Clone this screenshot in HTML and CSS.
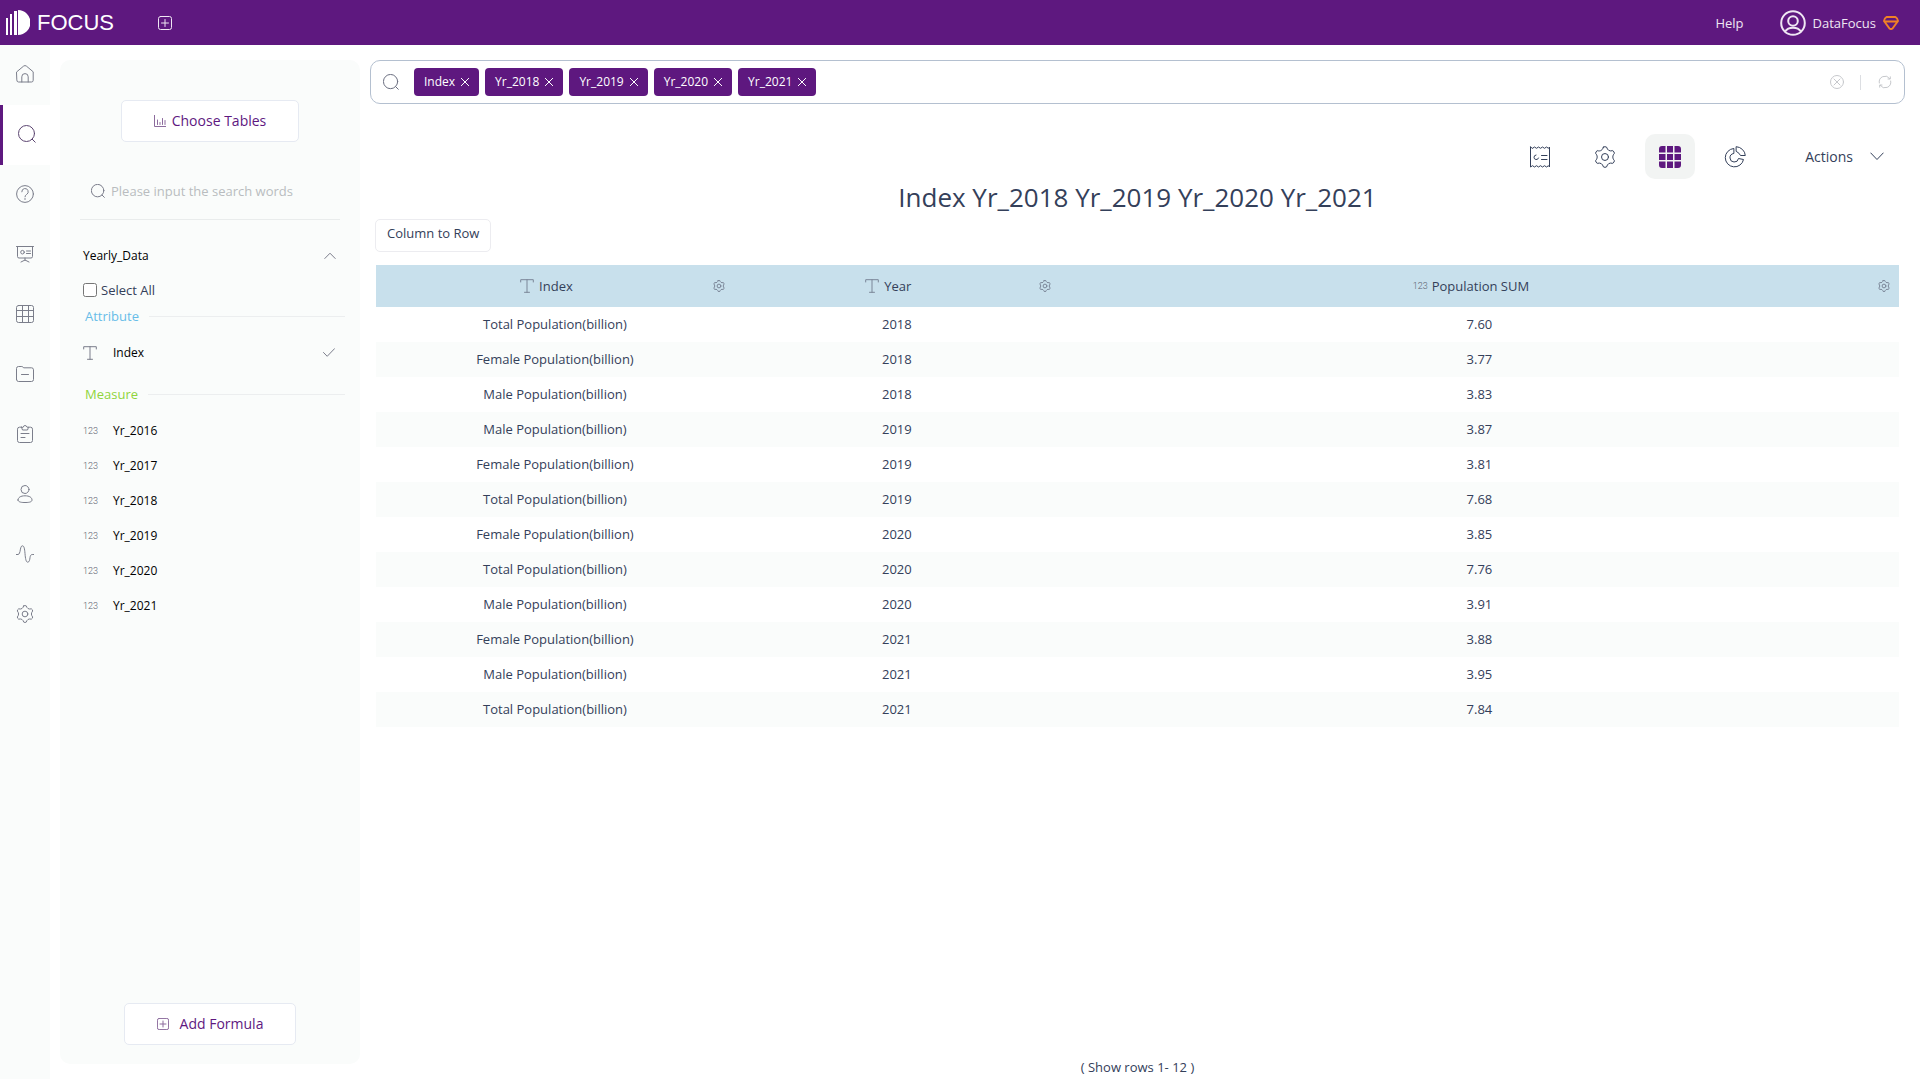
FILE: index.html
```html
<!DOCTYPE html>
<html lang="en">
<head>
<meta charset="utf-8">
<meta name="viewport" content="width=device-width, initial-scale=1">
<title>DataFocus - Search</title>
<link rel="stylesheet" href="styles.css">
</head>
<body>
<svg class="sprite" aria-hidden="true">
  <symbol id="i-plus" viewBox="0 0 14 14"><rect x=".5" y=".5" width="13" height="13" rx="2"/><path d="M7 3.500v7M3.500 7h7"/></symbol>
  <symbol id="i-home" viewBox="0 0 18 18"><path d="M.8 6.800 7.600 1.100Q9 0 10.400 1.100L17.200 6.800V15.300q0 1.700-1.700 1.700h-13Q.8 17 .8 15.300ZM5.800 17v-5.200a3.200 3.200 0 0 1 6.400 0V17"/></symbol>
  <symbol id="i-search" viewBox="0 0 18 18"><circle cx="8.500" cy="8.500" r="8"/><path d="m14.200 14.200 3 3"/></symbol>
  <symbol id="i-help" viewBox="0 0 18 18"><circle cx="9" cy="9" r="8.400"/><path d="M5.800 6.800a3.200 3.200 0 1 1 4.800 2.700Q9 10.300 9 11.800M9 13.500v1"/></symbol>
  <symbol id="i-board" viewBox="0 0 18 18"><path d="M.5 1.500h17M1.500 1.500v10q0 1.500 1.500 1.500h12q1.500 0 1.500-1.500v-10M9 13v2.500M5 17l4-2 4 2M10.500 6h4M10.500 8.500h4"/><circle cx="6.500" cy="7.200" r="1.800"/></symbol>
  <symbol id="i-table" viewBox="0 0 18 18"><rect x=".5" y=".5" width="17" height="17" rx="2"/><path d="M.5 5.500h17M.5 11.500h17M6.500.5v17M12.500.5v17"/></symbol>
  <symbol id="i-folder" viewBox="0 0 18 18"><path d="M.5 14.500v-11Q.5 1.500 2.500 1.500h3.300q1 0 1.800 1.300h7.900q2 0 2 2v9.700q0 2-2 2H2.500q-2 0-2-2ZM5.500 9.500h7"/></symbol>
  <symbol id="i-clip" viewBox="0 0 18 18"><path d="M5.500 2.200H3.500Q1.500 2.200 1.500 4.200V15.500q0 2 2 2h11q2 0 2-2V4.200q0-2-2-2h-2M5.500 2.200 6.500 5h5l1-2.800h-1.500Q10.500.5 9 .5T7 2.200ZM5 8.500h8M5 12.500h4"/></symbol>
  <symbol id="i-person" viewBox="0 0 18 18"><circle cx="9" cy="4.500" r="4"/><path d="M2 15c0-2.500 2.500-4.200 7-4.200s7 1.700 7 4.200-4.500 2.500-7 2.500-7 0-7-2.500Z"/></symbol>
  <symbol id="i-pulse" viewBox="0 0 18 18"><path d="M.3 9.500H2Q3.500 9.500 4 6.500C4.600 3 5 .8 6.500.8S8.600 3.500 9 8.500s1 8.700 2.700 8.700 2-2.500 2.300-4.500.8-3.200 2.200-3.200h1.500"/></symbol>
  <symbol id="i-gear" viewBox="0 0 24 24"><path d="M10.300 1.200Q12 .2 13.700 1.200C14.800 4.500 16.500 6 20.500 5.130Q22.300 6.200 22.200 8.070C20 10.500 20 13.500 22.200 15.930Q22.300 17.800 20.500 18.870C16.500 18 14.800 19.500 13.700 22.800Q12 23.800 10.300 22.800C9.200 19.500 7.500 18 3.500 18.870Q1.700 17.800 1.800 15.930C4 13.500 4 10.500 1.800 8.070Q1.700 6.200 3.500 5.130C7.500 6 9.200 4.500 10.300 1.200Z"/><circle cx="12" cy="12" r="3.800"/></symbol>
  <symbol id="i-bars" viewBox="0 0 12 12"><path d="M.5 0v11.500H12M3.500 5v4.500M6 7.500v2M8.500 3.500v6M11 5.500v4"/></symbol>
  <symbol id="i-up" viewBox="0 0 12 8"><path d="M.8 6.500 6 1.200l5.200 5.300"/></symbol>
  <symbol id="i-down" viewBox="0 0 14 9"><path d="m.8 1 6.200 6.500L13.200 1"/></symbol>
  <symbol id="i-check" viewBox="0 0 12 9"><path d="m.5 4.500 3.700 3.800L11.500.7"/></symbol>
  <symbol id="i-text" viewBox="0 0 14 14"><path d="M.7 3V.7h12.600V3M7 .7v12.600M4.500 13.300h5"/></symbol>
  <symbol id="i-x" viewBox="0 0 8 8"><path d="m.3.3 7.400 7.400M7.700.3.300 7.700"/></symbol>
  <symbol id="i-clear" viewBox="0 0 14 14"><circle cx="7" cy="7" r="6.500"/><path d="m4 4 6 6M10 4l-6 6"/></symbol>
  <symbol id="i-refresh" viewBox="0 0 14 14"><path d="M1.300 8A5.800 5.800 0 0 1 11.800 3.700M12.700 6A5.800 5.800 0 0 1 2.200 10.300M12.300 1.800v2.200h-2.300M1.700 12.200V10h2.300"/></symbol>
  <symbol id="i-receipt" viewBox="0 0 20 22"><path d="M.5 1V21L2.500 19.700l2 1.300 2-1.300 2 1.300 2-1.300 2 1.300 2-1.300 2 1.300 2-1.300 1 1.300V1L18.500 2.300l-2-1.300-2 1.300-2-1.300-2 1.300-2-1.300-2 1.300-2-1.300-2 1.300ZM11.500 9.500H17M11.500 13.500H17M6 9A2.300 2.300 0 1 0 8.500 12"/></symbol>
  <symbol id="i-pie" viewBox="0 0 22 22"><path d="M9.500 2.500A9.200 9.200 0 1 0 19.500 13.500L14.500 12.500A4.300 4.300 0 1 1 9.500 7.500ZM12.500.7A9.500 9.500 0 0 1 21.300 9.500H16.500Q15.500 7 12.500 5.500Z"/></symbol>
  <symbol id="i-user" viewBox="0 0 26 26"><circle cx="13" cy="13" r="11.800"/><circle cx="13" cy="11" r="4.800"/><path d="M5 21.500q2.500-3.800 8-3.800t8 3.800"/></symbol>
  <symbol id="i-gem" viewBox="0 0 16 14"><path d="M3.500 1h9q2.500 1.500 2.500 4L9.500 12.500q-1.500 1-3 0L1 5q0-2.500 2.500-4ZM1.500 5.500h13"/></symbol>
</svg>

<header class="topbar">
  <a class="logo" href="#">
    <svg width="24" height="25" viewBox="0 0 24 25" aria-hidden="true"><path d="M0 8h2v17H0ZM4 4h2v21H4ZM8 1h3v24H8ZM12 0a12.500 12.500 0 0 1 0 25Z"/></svg>
    <span>FOCUS</span>
  </a>
  <button class="bare add-tab" aria-label="New tab"><svg class="icon s14"><use href="#i-plus"/></svg></button>
  <a class="help" href="#">Help</a>
  <button class="bare account">
    <svg class="icon s26"><use href="#i-user"/></svg>
    <span>DataFocus</span>
    <svg class="icon gem"><use href="#i-gem"/></svg>
  </button>
</header>

<div class="shell">
  <nav class="rail">
    <a href="#" aria-label="Home"><svg class="icon s18"><use href="#i-home"/></svg></a>
    <a href="#" aria-label="Search" class="active"><svg class="icon s18"><use href="#i-search"/></svg></a>
    <a href="#" aria-label="Questions"><svg class="icon s18"><use href="#i-help"/></svg></a>
    <a href="#" aria-label="Boards"><svg class="icon s18"><use href="#i-board"/></svg></a>
    <a href="#" aria-label="Tables"><svg class="icon s18"><use href="#i-table"/></svg></a>
    <a href="#" aria-label="Resources"><svg class="icon s18"><use href="#i-folder"/></svg></a>
    <a href="#" aria-label="Tasks"><svg class="icon s18"><use href="#i-clip"/></svg></a>
    <a href="#" aria-label="Users"><svg class="icon s18"><use href="#i-person"/></svg></a>
    <a href="#" aria-label="Monitoring"><svg class="icon s18"><use href="#i-pulse"/></svg></a>
    <a href="#" aria-label="Settings"><svg class="icon s18"><use href="#i-gear"/></svg></a>
  </nav>

  <aside class="panel">
    <button class="boxed choose"><svg class="icon s12"><use href="#i-bars"/></svg>Choose Tables</button>
    <div class="find">
      <svg class="icon s14"><use href="#i-search"/></svg>
      <input type="text" aria-label="Search columns" placeholder="Please input the search words">
    </div>
    <button class="bare source"><span>Yearly_Data</span><svg class="icon up"><use href="#i-up"/></svg></button>
    <div class="select-all"><input type="checkbox" id="all"><label for="all">Select All</label></div>
    <h2 class="group attribute">Attribute</h2>
    <ul class="fields">
      <li><svg class="icon s14"><use href="#i-text"/></svg><span>Index</span><svg class="icon check"><use href="#i-check"/></svg></li>
    </ul>
    <h2 class="group measure">Measure</h2>
    <ul class="fields">
      <li><i class="num">123</i><span>Yr_2016</span></li>
      <li><i class="num">123</i><span>Yr_2017</span></li>
      <li><i class="num">123</i><span>Yr_2018</span></li>
      <li><i class="num">123</i><span>Yr_2019</span></li>
      <li><i class="num">123</i><span>Yr_2020</span></li>
      <li><i class="num">123</i><span>Yr_2021</span></li>
    </ul>
    <button class="boxed formula"><svg class="icon s12"><use href="#i-plus"/></svg>Add Formula</button>
  </aside>

  <main class="main">
    <div class="query">
      <svg class="icon s16"><use href="#i-search"/></svg>
      <div class="tags">
        <button class="tag">Index<svg class="icon s8"><use href="#i-x"/></svg></button>
        <button class="tag">Yr_2018<svg class="icon s8"><use href="#i-x"/></svg></button>
        <button class="tag">Yr_2019<svg class="icon s8"><use href="#i-x"/></svg></button>
        <button class="tag">Yr_2020<svg class="icon s8"><use href="#i-x"/></svg></button>
        <button class="tag">Yr_2021<svg class="icon s8"><use href="#i-x"/></svg></button>
      </div>
      <button class="bare faint" aria-label="Clear"><svg class="icon s14"><use href="#i-clear"/></svg></button>
      <span class="rule"></span>
      <button class="bare faint" aria-label="Refresh"><svg class="icon s14"><use href="#i-refresh"/></svg></button>
    </div>

    <div class="tools">
      <button class="bare tool" aria-label="Details"><svg class="icon s22"><use href="#i-receipt"/></svg></button>
      <button class="bare tool" aria-label="Configure"><svg class="icon s22"><use href="#i-gear"/></svg></button>
      <button class="bare tool on" aria-label="Table view"><svg class="s22" viewBox="0 0 22 22"><path d="M3 0h3.500v6.500H0V3Q0 0 3 0ZM8 0h6v6.500H8ZM15.500 0H19q3 0 3 3v3.500h-6.500ZM0 8h6.500v6H0ZM8 8h6v6H8ZM15.500 8H22v6h-6.500ZM0 15.500h6.500V22H3q-3 0-3-3ZM8 15.500h6V22H8ZM15.500 15.500H22V19q0 3-3 3h-3.500Z"/></svg></button>
      <button class="bare tool" aria-label="Chart view"><svg class="icon s22"><use href="#i-pie"/></svg></button>
      <button class="bare actions">Actions<svg class="icon down"><use href="#i-down"/></svg></button>
    </div>

    <h1>Index Yr_2018 Yr_2019 Yr_2020 Yr_2021</h1>
    <button class="swap">Column to Row</button>

    <table class="grid">
      <colgroup><col class="c1"><col class="c2"><col class="c3"></colgroup>
      <thead>
        <tr>
          <th><div class="head"><svg class="icon s14"><use href="#i-text"/></svg>Index<button class="bare cog" aria-label="Index settings"><svg class="icon s12"><use href="#i-gear"/></svg></button></div></th>
          <th><div class="head"><svg class="icon s14"><use href="#i-text"/></svg>Year<button class="bare cog" aria-label="Year settings"><svg class="icon s12"><use href="#i-gear"/></svg></button></div></th>
          <th><div class="head"><i class="num">123</i>Population SUM<button class="bare cog" aria-label="Population settings"><svg class="icon s12"><use href="#i-gear"/></svg></button></div></th>
        </tr>
      </thead>
      <tbody>
        <tr><td>Total Population(billion)</td><td>2018</td><td>7.60</td></tr>
        <tr><td>Female Population(billion)</td><td>2018</td><td>3.77</td></tr>
        <tr><td>Male Population(billion)</td><td>2018</td><td>3.83</td></tr>
        <tr><td>Male Population(billion)</td><td>2019</td><td>3.87</td></tr>
        <tr><td>Female Population(billion)</td><td>2019</td><td>3.81</td></tr>
        <tr><td>Total Population(billion)</td><td>2019</td><td>7.68</td></tr>
        <tr><td>Female Population(billion)</td><td>2020</td><td>3.85</td></tr>
        <tr><td>Total Population(billion)</td><td>2020</td><td>7.76</td></tr>
        <tr><td>Male Population(billion)</td><td>2020</td><td>3.91</td></tr>
        <tr><td>Female Population(billion)</td><td>2021</td><td>3.88</td></tr>
        <tr><td>Male Population(billion)</td><td>2021</td><td>3.95</td></tr>
        <tr><td>Total Population(billion)</td><td>2021</td><td>7.84</td></tr>
      </tbody>
    </table>
    <p class="count">( Show rows 1- 12 )</p>
  </main>
</div>
</body>
</html>
```
FILE: styles.css
```css
:root {
  --purple: #5e187f;
  --ink: #34405a;
  --line: #e6eaf2;
  --soft: #fafcfb;
}

* { box-sizing: border-box; }

body {
  margin: 0;
  min-height: 100vh;
  display: flex;
  flex-direction: column;
  background: #fff;
  color: var(--ink);
  font: 13px/20px "Open Sans", "Noto Sans", sans-serif;
}

button, input { font: inherit; color: inherit; }
button { cursor: pointer; }
a { color: inherit; text-decoration: none; }
ul { list-style: none; margin: 0; padding: 0; }

.sprite { display: none; }
symbol * { vector-effect: non-scaling-stroke; }

.icon {
  display: block;
  flex: none;
  fill: none;
  stroke: currentColor;
  stroke-width: 1;
  stroke-linecap: round;
  stroke-linejoin: round;
}
.s8 { width: 8px; height: 8px; }
.s12 { width: 12px; height: 12px; }
.s14 { width: 14px; height: 14px; }
.s16 { width: 16px; height: 16px; }
.s18 { width: 18px; height: 18px; }
.s22 { width: 22px; height: 22px; }
.s26 { width: 26px; height: 26px; }

.bare {
  display: flex;
  align-items: center;
  padding: 0;
  border: 0;
  background: none;
}

/* Top bar */
.topbar {
  display: flex;
  align-items: center;
  height: 45px;
  padding: 0 21px 0 6px;
  background: var(--purple);
  color: #efe6f3;
}
.logo {
  display: flex;
  align-items: center;
  gap: 7px;
  color: #fff;
  font: 22px/24px "Liberation Sans", Arial, sans-serif;
}
.logo svg { fill: currentColor; }
.add-tab { margin-left: 44px; }
.help { margin-left: auto; }
.account { margin-left: 36px; gap: 7px; }
.gem {
  width: 16px;
  height: 14px;
  color: #f08026;
  stroke-width: 2;
}
.account .s26 { stroke-width: 2; }

/* Layout */
.shell { flex: 1; display: flex; }

.rail {
  flex: none;
  width: 50px;
  background: var(--soft);
  color: #7b7e8b;
}
.rail a {
  display: flex;
  align-items: center;
  justify-content: center;
  height: 60px;
  padding-bottom: 2px;
}
.rail .active {
  border-left: 3px solid var(--purple);
  background: #fff;
  color: #5b4470;
}

/* Column panel */
.panel {
  flex: none;
  display: flex;
  flex-direction: column;
  width: 300px;
  margin: 15px 10px;
  padding: 40px 15px 19px 20px;
  border-radius: 10px;
  background: var(--soft);
}
.boxed {
  display: flex;
  align-items: center;
  justify-content: center;
  height: 42px;
  padding-bottom: 2px;
  border: 1px solid var(--line);
  border-radius: 5px;
  background: #fff;
  color: var(--purple);
  font-size: 14px;
}
.boxed .icon { color: #8c6b9d; }
.choose { width: 178px; margin-left: 41px; gap: 6px; }
.formula { width: 172px; margin: auto 0 0 44px; gap: 11px; }

.find {
  display: flex;
  align-items: center;
  gap: 6px;
  width: 260px;
  height: 58px;
  margin-top: 20px;
  padding-left: 11px;
  border-bottom: 1px solid #e9ecec;
  color: #7b7d8b;
}
.find input {
  flex: 1;
  min-width: 0;
  padding: 0;
  border: 0;
  outline: 0;
  background: none;
}
.find input::placeholder { color: #b9bcbf; }

.source {
  justify-content: space-between;
  height: 30px;
  margin-top: 21px;
  padding: 0 9px 0 3px;
  color: #000;
  font-size: 12px;
}
.up { width: 12px; height: 8px; color: #7b7d8b; }

.select-all {
  display: flex;
  align-items: center;
  gap: 4px;
  height: 30px;
  margin-top: 5px;
  padding: 0 0 2px 3px;
}
.select-all input { width: 14px; height: 14px; margin: 0; }

.group {
  display: flex;
  align-items: center;
  gap: 10px;
  height: 20px;
  margin: 0;
  padding-left: 5px;
  font-size: 13px;
  font-weight: 400;
}
.group::after { content: ""; flex: 1; height: 1px; background: #eceeef; }
.attribute { color: #67bce8; }
.measure { margin-top: 13px; color: #8fd43c; }
.group + .fields { margin-top: 10px; }

.fields li {
  display: flex;
  align-items: center;
  height: 35px;
  padding: 0 10px 2px 3px;
  color: #000;
  font-size: 12px;
}
.fields .icon { color: #7b7d8b; }
.fields span { margin-left: 16px; }
.fields .check { width: 12px; height: 9px; margin-left: auto; }
.num {
  flex: none;
  width: 14px;
  color: #5c6270;
  font: 300 9px/12px Roboto, sans-serif;
}

/* Query bar */
.main {
  flex: 1;
  min-width: 0;
  display: flex;
  flex-direction: column;
  padding: 15px 15px 2px 0;
}
.query {
  display: flex;
  align-items: center;
  height: 44px;
  padding: 0 12px;
  border: 1px solid #b4c0d0;
  border-radius: 10px;
}
.query > .s16 { color: #6b6f80; }
.tags { flex: 1; display: flex; gap: 6px; margin-left: 15px; }
.tag {
  display: flex;
  align-items: center;
  gap: 6px;
  height: 28px;
  padding: 0 10px;
  border: 0;
  border-radius: 4px;
  background: var(--purple);
  color: #fff;
  font-size: 12px;
}
.faint { color: #c6c8cc; }
.rule { width: 1px; height: 15px; margin: 0 17px 0 16px; background: #dcdee2; }

/* View tools */
.tools {
  display: flex;
  justify-content: flex-end;
  gap: 15px;
  height: 45px;
  margin-top: 30px;
  padding-right: 21px;
}
.tool { justify-content: center; width: 50px; border-radius: 10px; }
.tool.on { background: #f2f4f3; }
.tool.on svg { fill: var(--purple); }
.actions { gap: 17px; margin-left: 30px; font-size: 14px; }
.down { width: 14px; height: 9px; }

h1 {
  margin: 0;
  font-size: 26px;
  line-height: 36px;
  font-weight: 400;
  text-align: center;
}
.swap {
  align-self: flex-start;
  height: 33px;
  margin: 4px 0 0 5px;
  padding: 0 11px 5px;
  border: 1px solid #ececf0;
  border-radius: 5px;
  background: #fff;
}

/* Result table */
.grid {
  width: auto;
  margin: 13px 6px 0;
  border-collapse: collapse;
  table-layout: fixed;
}
.c1 { width: 23.5%; }
.c2 { width: 21.4%; }
.grid th {
  height: 42px;
  padding: 0;
  background: #c8e0ec;
  font-weight: 400;
}
.head {
  position: relative;
  display: flex;
  align-items: center;
  justify-content: center;
  gap: 5px;
  padding-right: 17px;
}
.head .icon { color: #7b8698; }
.cog { position: absolute; right: 9px; }
.grid td { height: 35px; padding: 0 0 2px; text-align: center; }
.grid tbody tr:nth-child(even) { background: var(--soft); }

.count { margin: auto 0 0; text-align: center; }
```
